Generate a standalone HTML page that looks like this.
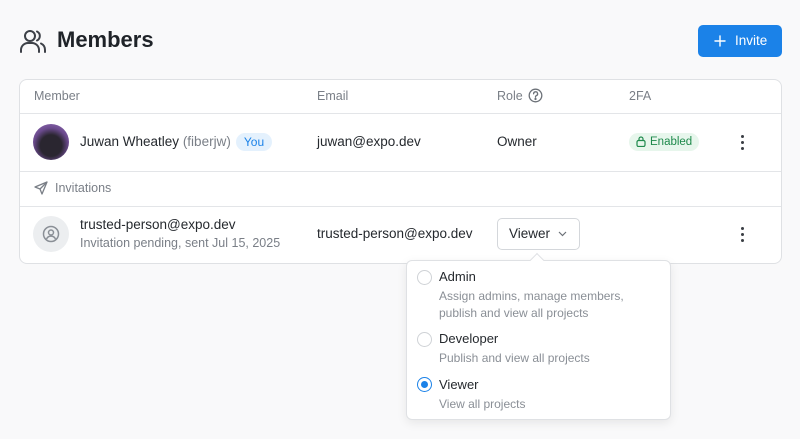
<!DOCTYPE html>
<html><head><meta charset="utf-8"><style>
*{box-sizing:border-box;margin:0;padding:0}
body{width:800px;height:439px;background:#f9f9fa;font-family:"Liberation Sans",sans-serif;color:#25292e;position:relative;overflow:hidden}
.a{position:absolute;white-space:nowrap}
.card{position:absolute;left:19px;top:79px;width:763px;height:185px;border:1px solid #dfe1e4;border-radius:8px;background:#fff;overflow:hidden}
.hl{position:absolute;left:0;right:0;height:1px;background:#e3e5e8}
.th{font-size:12.5px;color:#7a7f87}
.td{font-size:13.5px;color:#25292e}
.dots{position:absolute;width:4px}
.dots i{display:block;width:3px;height:3px;border-radius:50%;background:#3a3e44;margin-bottom:3px}
.radio{position:absolute;width:15px;height:15px;border-radius:50%;border:1px solid #cfd2d6;background:#fff}
.ot{font-size:13px;color:#25292e}
.od{font-size:12px;color:#8a8f96;line-height:17px}
</style></head><body>
<svg class="a" style="left:19px;top:28px" width="28" height="26" viewBox="0 0 28 26" fill="none" stroke="#3d4148" stroke-width="2" stroke-linecap="round"><circle cx="11" cy="8" r="5"/><path d="M2 24v-2a7 7 0 0 1 7-7h4a7 7 0 0 1 7 7v2"/><path d="M18 3.5a5 5 0 0 1 0 9"/><path d="M22 15.5a7 7 0 0 1 4 6.5v2"/></svg>
<div class="a" style="left:57px;top:27px;font-size:22px;font-weight:bold;color:#1f2328">Members</div>
<div class="a" style="left:698px;top:25px;width:84px;height:32px;background:#1b82e8;border-radius:5px;color:#fff;font-size:13.5px;line-height:32px;padding-left:37px">Invite</div>
<svg class="a" style="left:714px;top:35px" width="12" height="12" viewBox="0 0 12 12" stroke="#fff" stroke-width="1.4" stroke-linecap="round"><path d="M6 1v10M1 6h10"/></svg>

<div class="card">
<div class="hl" style="top:33px"></div>
<div class="hl" style="top:91px"></div>
<div class="hl" style="top:126px"></div>
</div>
<div class="a th" style="left:34px;top:89px">Member</div>
<div class="a th" style="left:317px;top:89px">Email</div>
<div class="a th" style="left:497px;top:89px">Role</div>
<svg class="a" style="left:528px;top:88px" width="15" height="15" viewBox="0 0 15 15" fill="none" stroke="#6c7178" stroke-width="1.3"><circle cx="7.5" cy="7.5" r="6.3"/><path d="M5.6 5.8a2 2 0 1 1 2.6 1.9c-.5.2-.7.5-.7 1.1v.4" stroke-linecap="round"/><circle cx="7.5" cy="11" r=".5" fill="#6c7178"/></svg>
<div class="a th" style="left:629px;top:89px">2FA</div>

<div class="a" style="left:33px;top:124px;width:36px;height:36px;border-radius:50%;background:radial-gradient(circle at 50% 60%,#2a2630 0 38%,#6a4a8c 62%,#9a74c0 100%)"></div>
<div class="a" style="left:80px;top:134px;font-size:13.5px">Juwan Wheatley <span style="color:#7a7f87">(fiberjw)</span></div>
<div class="a" style="left:236px;top:133px;width:36px;height:18px;border-radius:9px;background:#e4f1fd;color:#1b82e8;font-size:12px;text-align:center;line-height:18px">You</div>
<div class="a td" style="left:317px;top:134px">juwan@expo.dev</div>
<div class="a td" style="left:497px;top:134px">Owner</div>
<div class="a" style="left:629px;top:133px;width:70px;height:18px;border-radius:9px;background:#e7f6ec;color:#1f8a4c;font-size:11.5px;line-height:18px;padding-left:21px">Enabled</div>
<svg class="a" style="left:636px;top:136px" width="10" height="11" viewBox="0 0 10 11" fill="none" stroke="#1f8a4c" stroke-width="1.2"><rect x="1" y="4.5" width="8" height="6" rx="1.5"/><path d="M3 4.5V3a2 2 0 0 1 4 0v1.5"/></svg>
<div class="dots" style="left:741px;top:135px"><i></i><i></i><i></i></div>

<svg class="a" style="left:34px;top:181px" width="14" height="14" viewBox="0 0 14 14" fill="none" stroke="#7a7f87" stroke-width="1.3" stroke-linejoin="round"><path d="M13 1L1 6l5 2 2 5z"/><path d="M13 1L6 8"/></svg>
<div class="a" style="left:55px;top:181px;font-size:12.5px;color:#7a7f87">Invitations</div>

<div class="a" style="left:33px;top:216px;width:36px;height:36px;border-radius:50%;background:#eceef0"></div>
<svg class="a" style="left:42px;top:225px" width="18" height="18" viewBox="0 0 18 18" fill="none" stroke="#8a8f96" stroke-width="1.5"><circle cx="9" cy="9" r="7.5"/><circle cx="9" cy="7.5" r="2.5"/><path d="M4.5 14a5 5 0 0 1 9 0"/></svg>
<div class="a" style="left:80px;top:217px;font-size:13.5px">trusted-person@expo.dev</div>
<div class="a" style="left:80px;top:236px;font-size:12.5px;color:#7a7f87">Invitation pending, sent Jul 15, 2025</div>
<div class="a td" style="left:317px;top:226px">trusted-person@expo.dev</div>
<div class="a" style="left:497px;top:218px;width:83px;height:32px;border:1px solid #d4d7db;border-radius:5px;background:#fff;font-size:13.5px;line-height:30px;padding-left:11px">Viewer</div>
<svg class="a" style="left:558px;top:231px" width="9" height="6" viewBox="0 0 9 6" fill="none" stroke="#6c7178" stroke-width="1.2"><path d="M1 1l3.5 3.5L8 1"/></svg>
<div class="dots" style="left:741px;top:227px"><i></i><i></i><i></i></div>

<div class="a" style="left:406px;top:260px;width:265px;height:160px;background:#fff;border:1px solid #dfe1e4;border-radius:6px;box-shadow:0 3px 10px rgba(0,0,0,.08)"></div>
<div class="a" style="left:532px;top:255px;width:10px;height:10px;background:#fff;border-left:1px solid #dfe1e4;border-top:1px solid #dfe1e4;transform:rotate(45deg)"></div>
<div class="radio" style="left:417px;top:270px"></div>
<div class="a ot" style="left:439px;top:269px">Admin</div>
<div class="a od" style="left:439px;top:288px">Assign admins, manage members,<br>publish and view all projects</div>
<div class="radio" style="left:417px;top:332px"></div>
<div class="a ot" style="left:439px;top:331px">Developer</div>
<div class="a od" style="left:439px;top:350px">Publish and view all projects</div>
<div class="radio" style="left:417px;top:377px;border:1.5px solid #1b82e8"></div>
<div class="a" style="left:421px;top:381px;width:7px;height:7px;border-radius:50%;background:#1b82e8"></div>
<div class="a ot" style="left:439px;top:377px">Viewer</div>
<div class="a od" style="left:439px;top:396px">View all projects</div>
</body></html>
